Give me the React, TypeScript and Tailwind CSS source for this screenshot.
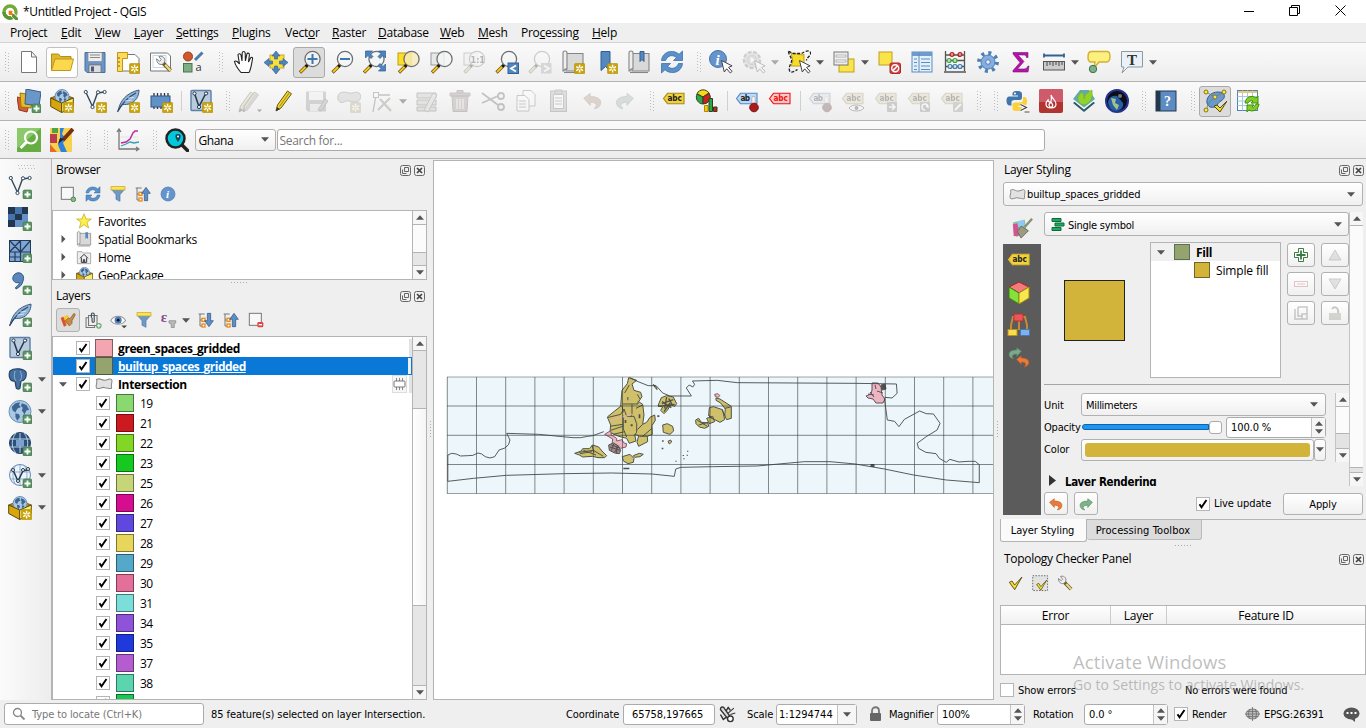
import React from "react";

type Kids = { children?: React.ReactNode };
const TAHOMA = "font-['DejaVu_Sans_Condensed','DejaVu_Sans',sans-serif] text-[11px] tracking-[-0.1px]";

/* ---------- icon building blocks ---------- */
const I = ({ children, s = 24, dim = false }: Kids & { s?: number; dim?: boolean }) => (
  <svg viewBox="0 0 24 24" width={s} height={s} className={dim ? "shrink-0 opacity-30 grayscale-[70%]" : "shrink-0"} fill="none">
    {children}
  </svg>
);
const Plus = () => (
  <g>
    <rect x="15" y="15" width="9" height="9" rx="1.5" fill="#5b9361" stroke="#3f7346" strokeWidth=".6" />
    <path d="M19.5 16.5v6M16.5 19.5h6" stroke="#fff" strokeWidth="1.8" />
  </g>
);
const Star = () => (
  <g>
    <rect x="13.5" y="13.5" width="10.3" height="10.3" rx="1" fill="#c9a30a" stroke="#a98700" strokeWidth=".5" />
    <path d="M18.6 14.8v7.8M15.2 16.7l6.8 4M15.2 20.7l6.8-4" stroke="#fff" strokeWidth="1.4" />
    <circle cx="18.6" cy="18.7" r="1.2" fill="#d9b42c" />
  </g>
);
const Lens = ({ x = 14, fill = "#f4f6f7" }: { x?: number; fill?: string }) => (
  <g>
    <path d={`M${x - 5.5} 15.5L${x - 12.5} 22.5`} stroke="#6b5310" strokeWidth="3.2" />
    <path d={`M${x - 7} 17L${x - 12} 22`} stroke="#f8c81c" strokeWidth="1.8" />
    <path d={`M${x - 4.5} 14.5l-2 2`} stroke="#111" strokeWidth="3" />
    <circle cx={x} cy="9" r="7.6" fill={fill} fillOpacity=".82" stroke="#6d7073" strokeWidth="1.3" />
  </g>
);
const Cursor = () => <path d="M12.5 10.5l2.8 11.5 2.4-3.2 3.6 4.2 1.8-1.6-3.6-4 3.6-1.5z" fill="#fff" stroke="#444" strokeWidth="1" />;
const Vee = () => (
  <g stroke="#34495e" strokeWidth="1.4">
    <path d="M3 3.5l6.5 14 5-13.5 7-1" />
    <circle cx="2.8" cy="3" r="1.6" fill="#fff" strokeWidth="1" />
    <circle cx="9.5" cy="18" r="1.6" fill="#fff" strokeWidth="1" />
    <circle cx="15" cy="3.3" r="1.6" fill="#fff" strokeWidth="1" />
    <circle cx="21.6" cy="3" r="1.6" fill="#fff" strokeWidth="1" />
  </g>
);
const Feather = () => (
  <g>
    <path d="M2 22C4 12 10 4 23 1c0 6-3 12-10 14-4 1-6 0-7 1z" fill="#8fb4da" stroke="#3d5a7a" strokeWidth="1" />
    <path d="M1.5 23C6 14 12 8 20 4" stroke="#2d4a6b" strokeWidth="1.2" />
    <path d="M9 12l7-1M12 9l6-.5" stroke="#e4eef8" strokeWidth=".8" />
  </g>
);
const Globe = ({ cx = 12, cy = 11.5, r = 11 }: { cx?: number; cy?: number; r?: number }) => (
  <g>
    <circle cx={cx} cy={cy} r={r} fill="#a9c8e8" stroke="#6f90b4" strokeWidth="1" />
    <g transform={`translate(${cx - r} ${cy - r}) scale(${r / 12})`} fill="#3f658f">
      <path d="M3 7l4-4 5-1-1 3 2 2-4 2-2 4-3-2zM14 3l5 2 3 5-3 1-2 4-3-4 1-3-2-2zM7 14l4 1 1 3-3 4-2-4zM16 15l4 1-3 4-2-2z" />
    </g>
  </g>
);
const Box3D = () => (
  <g>
    <path d="M.7 9l11-4.500 11.600 4.500-11.600 5z" fill="#b48c0c" stroke="#5c4a0d" strokeWidth=".8" />
    <Globe cx={12} cy={7.5} r={7} />
    <path d="M.7 9l11 5v9.500L.7 17.500z" fill="#d9a50b" stroke="#5c4a0d" />
    <path d="M11.700 14l11.600-5v8.500l-11.600 6z" fill="#fbee6d" stroke="#5c4a0d" />
  </g>
);
const Tag = ({ c = "#f0d03c", t = "abc", s = "#a58c14", f = "#222", y = 4 }: { c?: string; t?: string; s?: string; f?: string; y?: number }) => (
  <g>
    <path d={`M1.500 ${y + 5.5}l4-5.200h16.500v10.400H5.500z`} fill={c} stroke={s} strokeWidth="1.1" />
    <text x="5.500" y={y + 8.4} fontSize="8.200" fontWeight="bold" fontFamily="DejaVu Sans Condensed, DejaVu Sans" fill={f} textLength={t.length * 4.8}>{t}</text>
  </g>
);
const PencilShape = ({ x = 0 }: { x?: number }) => (
  <g transform={`translate(${x} 0)`}>
    <path d="M5 22l1.500-6L16.500 2l4 2.800L10 19z" fill="#f1d32a" stroke="#655a16" />
    <path d="M8.500 17.500L18.500 3.500" stroke="#a08a12" />
    <path d="M5 22l1-4 3 2.200z" fill="#333" />
  </g>
);
const Db = () => (
  <g>
    <rect x="2" y="1.500" width="20" height="20" rx="1" fill="#b9cbdc" stroke="#5b7fa6" strokeWidth="1.400" />
    <path d="M5.500 4.500l4.500 13L16 6l3-2.500" stroke="#24394f" strokeWidth="1.500" />
    <g fill="#fff" stroke="#24394f"><circle cx="5.500" cy="4.500" r="1.600" /><circle cx="10" cy="18" r="1.600" /><circle cx="17" cy="4.500" r="1.600" /></g>
  </g>
);
const Refresh = () => (
  <g fill="#5b91cb" stroke="#2f65a0" strokeWidth=".7">
    <path d="M1.500 10.500C2 4.500 7 1 12.500 1.500c3 .2 5 1.300 6.500 2.800L22.500 1v9.500h-9L16.500 7.500C12.500 4.500 8 5 5.500 10.500z" />
    <path d="M22.500 13.500C22 19.500 17 23 11.500 22.500c-3-.2-5-1.300-6.500-2.800L1.500 23v-9.500h9L7.500 16.500c4 3 8.500 2.500 11-3z" />
  </g>
);
const Funnel = () => (
  <g><path d="M2 5h20l-7 8v10l-6-3v-7z" fill="#7199c6" stroke="#4b76a6" /><rect x="1.500" y="1" width="21" height="5" fill="#fbe257" stroke="#c3a21a" /></g>
);
const Tree = ({ down = false }: { down?: boolean }) => (
  <g>
    <path d="M1 3h9M3 3v18M3 12h5M3 21h5" stroke="#777" strokeWidth="1.500" />
    <g fill="#fff" stroke="#ea8b1c" strokeWidth="2"><rect x="6" y="9.500" width="4.500" height="4.500" /><rect x="6" y="18" width="4.500" height="4.500" /></g>
    <path d={down ? "M14 2h5v11h4l-6.500 9-6.500-9h4z" : "M14 22h5V11h4L16.500 2 10 11h4z"} fill="#5f8fc7" stroke="#24507f" />
  </g>
);
const Info = () => (
  <g><circle cx="12" cy="12" r="10.500" fill="#6494cb" stroke="#4475ad" /><text x="9" y="18" fontSize="17" fontStyle="italic" fontWeight="bold" fontFamily="Liberation Serif" fill="#fff">i</text></g>
);
const Poly = () => <path d="M2 6C7 3 9 8 14 7s6-3 8-1-1 6 0 10-5 1-9 1c-3-2-6 2-10 1S4 10 2 6z" fill="#e2e2e2" stroke="#888" strokeWidth="1.400" />;
const Wrench = () => (
  <g><path d="M10 10l10 10" stroke="#6b5a20" strokeWidth="5" /><path d="M13 12.500l7 7.500" stroke="#ecd78a" strokeWidth="3" /><path d="M2 5l4 3 2-2L5 2c6-2 10 4 6 9-4 3-9 0-9-6z" fill="#eee" stroke="#666" /></g>
);
const Check = () => <path d="M2 11l4-2 4 6L21 3 10 22z" fill="#f6dc2c" stroke="#4b430d" strokeWidth="1.300" />;
const Scroll = () => (
  <g stroke="#858585" strokeWidth="1.100"><path d="M5 3.500h17V21H5z" fill="#d9d9d9" /><path d="M2 2.500c0-2 4-2 4 0V19c-2-.5-3 .5-3 2H2z" fill="#eee" /><path d="M3 22.500h18" /></g>
);
const Undo = () => <path d="M1 9l8-6v4c9 0 14 3 13 9-1 4-4 6-8 6 4-3 4-8-5-8v4z" fill="#ea7b3b" stroke="#ba5b23" />;
const Redo = ({ c = "#7cb487" }: { c?: string }) => <path d="M23 9l-8-6v4C6 7 1 10 2 16c1 4 4 6 8 6-4-3-4-8 5-8v4z" fill={c} stroke="#548760" />;
const Star5 = ({ s }: { s: number }) => <svg width={s} height={s} viewBox="0 0 24 24"><path d="M12 1l3 8h8l-6.500 5 2.500 8.500-7-5-7 5L7.500 14 1 9h8z" fill="#fdf04a" stroke="#c1a018" /></svg>;

const ic: Record<string, React.ReactNode> = {
  newFile: <path d="M4.500 1.500h10l5 5.500v15.500h-15zM14.500 1.500V7h5" fill="#fff" stroke="#777" />,
  open: <g><path d="M1.500 20.500V4h7l2 2.500H21v4" fill="#e0b62c" stroke="#b28d17" /><path d="M1.500 20.500L5 9h18.500l-3 11.500z" fill="#fbd84c" stroke="#bf9820" /></g>,
  save: <g><path d="M2 2.500h20v20H4l-2-2z" fill="#6a95c6" stroke="#456f9f" /><rect x="5" y="2.500" width="14" height="9" fill="#eee" stroke="#888" strokeWidth=".7" /><path d="M7 5h10M7 7.500h10" stroke="#888" /><rect x="6" y="15" width="12" height="7.500" fill="#ddd" stroke="#667" strokeWidth=".7" /><rect x="8" y="16.500" width="3" height="5" fill="#557" /></g>,
  layout: <g><path d="M5 4.500h14l4 4V21H5z" fill="#fff" stroke="#777" /><path d="M1.500 2.500h10v6h-5v13h-5z" fill="#fbdb57" stroke="#bd9520" /><path d="M2 12h2M2 16h2M2 8h2" stroke="#806412" /><Star /></g>,
  layoutMgr: <g><path d="M1.500 3h17l3 3v15h-20z" fill="#fff" stroke="#777" /><path d="M4 5.500h13v12H4z" stroke="#c6d6ea" /><g transform="translate(6 5) scale(.78)"><Wrench /></g></g>,
  style: <g><circle cx="6" cy="6.500" r="4.500" fill="#d0562c" stroke="#9b3c1a" /><path d="M13 10l7.500-7.500" stroke="#4d7cab" strokeWidth="3" /><rect x="1.500" y="13.500" width="8.500" height="8.500" fill="#7fae85" stroke="#48764e" /><text x="13.500" y="20.500" fontSize="11" fontFamily="Open Sans" fill="#333">a</text></g>,
  hand: <path d="M8 22.500C5 19 2 14 1.500 11.500 3 10 5 12 6.500 14L5 5c.5-2 2.500-1.500 3 0l1 6 .2-8c.3-2 2.500-2 3 0l.2 8 1.500-7c.5-1.500 2.500-1 2.500.7L15.500 12l2-4c1-1.200 2.500-.3 2 1-1 5-1.500 10-3.500 13.500z" fill="#fff" stroke="#222" strokeWidth="1.100" transform="translate(2 0)" />,
  pan: <g><rect x="6" y="5" width="14" height="13" fill="#f8df3c" stroke="#c9a91d" /><g fill="#4f83bd" stroke="#2d5d93" strokeWidth=".6"><path d="M12 1l4 5h-2.500v3h-3V6H8zM12 24l4-5h-2.500v-3h-3v3H8zM0 12.500l5-4V11h3.500v3H5v2.500zM24 12.500l-5-4V11h-3.500v3H19v2.500z" /></g></g>,
  zoomIn: <g><Lens x={15.500} /><path d="M15.500 4v10M10.500 9h10" stroke="#3f76b1" strokeWidth="2" /></g>,
  zoomOut: <g><Lens x={15} /><path d="M10 9h10" stroke="#3f76b1" strokeWidth="2" /></g>,
  zoomFull: <g><Lens x={13.500} /><path d="M2.500 1h7L7 3.500l3 3-2 2-3-3L2.500 8zM22.500 1v7L20 5.500l-3 3-2-2 3-3L15.500 1zM22.500 21v-7L20 16.500l-3-3-2 2 3 3-2.500 2.500z" fill="#4f83bd" stroke="#2d5d93" strokeWidth=".7" /></g>,
  zoomSel: <g><rect x="2" y="3" width="13" height="12" fill="#fbdf27" stroke="#bd9f12" /><Lens x={15.500} fill="#f6ebb8" /></g>,
  zoomLayer: <g><rect x="2" y="3" width="13" height="12" fill="#e8e8e8" stroke="#999" /><Lens x={15.500} /></g>,
  zoomNative: <g><rect x="2" y="3" width="13" height="12" fill="#eee" stroke="#777" /><Lens x={15} /><text x="8.500" y="12.500" fontSize="9" fontWeight="bold" fontFamily="DejaVu Sans Condensed" fill="#222">1:1</text></g>,
  zoomLast: <g><Lens x={14} /><rect x="13" y="13" width="10.500" height="10.500" fill="#5385bd" stroke="#2f6199" /><path d="M21 15.500l-5 3 5 3" stroke="#fff" strokeWidth="1.800" /></g>,
  zoomNext: <g><Lens x={14} /><rect x="13" y="13" width="10.500" height="10.500" fill="#999" /><path d="M16 15.500l5 3-5 3" stroke="#fff" strokeWidth="1.800" /></g>,
  newMap: <g><Scroll /><Star /></g>,
  newBm: <g><path d="M7 1.500h9v19l-4.500-4L7 20.500z" fill="#5688c0" stroke="#2f5f94" /><Star /></g>,
  bm: <g><Scroll /><path d="M13 1.500h4v10l-2-2-2 2z" fill="#5688c0" stroke="#2f5f94" /></g>,
  refresh: <Refresh />,
  identify: <g><circle cx="9" cy="9" r="8.500" fill="#6494cb" stroke="#4475ad" /><text x="6.500" y="14.500" fontSize="15" fontStyle="italic" fontWeight="bold" fontFamily="Liberation Serif" fill="#fff">i</text><Cursor /></g>,
  action: <g><circle cx="10" cy="10" r="8" fill="#ccc" stroke="#777" strokeWidth="2.500" strokeDasharray="4 1.500" /><circle cx="10" cy="10" r="5" fill="#aaa" stroke="#888" /><path d="M8.500 7l4.500 3-4.500 3z" fill="#fff" /><Cursor /></g>,
  select: <g><path d="M4 3l12 2 1-1v12H4l2-5z" fill="#f6dc2a" stroke="#c3a014" /><path d="M1.500 1.500c2 0 3 2 5 2h8c3-2 8-4 9-1s-4 5-4 8M1.500 1.500c0 3 4 7 3 10s-3 6-2 9 5 1 8-1" stroke="#222" strokeWidth="1.300" strokeDasharray="3 1.500" /><Cursor /></g>,
  selForm: <g><rect x="7" y="9" width="15" height="13" fill="#fbe34c" stroke="#bfa018" /><rect x="2" y="2" width="14" height="13" fill="#eee" stroke="#777" /><path d="M4 5h10v2H4zM4 10h10v2H4z" fill="#fff" stroke="#999" strokeWidth=".7" /></g>,
  desel: <g><rect x="2" y="2" width="13" height="13" fill="#fbe34c" stroke="#bfa018" /><rect x="13" y="13" width="10.500" height="10.500" rx="1.500" fill="#d33f3f" stroke="#ad2727" /><circle cx="18.200" cy="18.200" r="3.500" stroke="#fff" strokeWidth="1.500" /><path d="M15.800 20.600l4.800-4.800" stroke="#fff" strokeWidth="1.500" /></g>,
  table: <g><rect x="2" y="2" width="20" height="20" fill="#e3f0fb" stroke="#5d8cbf" /><path d="M2 2h20v4H2z" fill="#6d9bce" /><path d="M9 3v19M4 9h3M11 9h9M4 12.500h3M11 12.500h9M4 16h3M11 16h9M4 19.500h3M11 19.500h9" stroke="#5d8cbf" /></g>,
  abacus: <g><path d="M2.500 1v20M21.500 1v20M1 22h22M3 5h18M3 10.500h18M3 16.500h18" stroke="#555" strokeWidth="1.300" /><g strokeWidth="1.200"><circle cx="9" cy="4.500" r="2" fill="#f08a8a" stroke="#b41a1a" /><circle cx="17" cy="4.500" r="2" fill="#f08a8a" stroke="#b41a1a" /><circle cx="6" cy="10.500" r="2" fill="#b5e8b5" stroke="#43a047" /><circle cx="12" cy="10.500" r="2" fill="#b5e8b5" stroke="#43a047" /><circle cx="7" cy="16.500" r="2" fill="#cfe4f5" stroke="#4478a8" /><circle cx="12" cy="16.500" r="2" fill="#cfe4f5" stroke="#4478a8" /><circle cx="17" cy="16.500" r="2" fill="#cfe4f5" stroke="#4478a8" /></g></g>,
  gear: <g stroke="#4c7eb8" fill="#86ade0"><circle cx="12" cy="12" r="9" strokeWidth="3.800" strokeDasharray="3 4.070" fill="none" /><circle cx="12" cy="12" r="7" /><circle cx="12" cy="12" r="2.300" fill="#eee" /></g>,
  sigma: <path d="M4 2.500h15v5h-1.500c-.5-2-1-2.500-3.500-2.500H9l6 6.500L8.500 19H15c2 0 3-1 4-3h1l-1 6H4v-1.500L11 12.500 4 4z" fill="#b315a8" stroke="#7f0d78" strokeWidth=".6" />,
  measure: <g><path d="M2 5.500h20M2 3.500v4M22 3.500v4" stroke="#34618f" strokeWidth="1.800" /><rect x="1.500" y="11.500" width="21" height="8.500" fill="#ccc" stroke="#555" /><path d="M5 12v4M8 12v3M11 12v4M14 12v3M17 12v4M20 12v3" stroke="#444" /></g>,
  tips: <g><path d="M4 1.500h16c4 0 4 10 0 10.500h-8l-5 6 1-6H4C0 12 0 2 4 1.500z" fill="#fdf07e" stroke="#d0b131" strokeWidth="1.400" /><circle cx="6" cy="19" r="3.700" fill="#7bb08a" stroke="#3f7047" /></g>,
  text: <g><path d="M1.500 1.500h21V17H8l-6 6 2-6H1.500z" fill="#eaf1f7" stroke="#8f99a0" /><text x="7" y="14.500" fontSize="15" fontWeight="bold" fontFamily="Liberation Serif" fill="#333">T</text></g>,
  dsm: <g><path d="M0 8l13 3-3 12-8-2z" fill="#d46036" stroke="#91351b" /><path d="M3 4l13 2-2 13-10-1z" fill="#e9b823" stroke="#9a7408" /><path d="M9 0l15 3-2 14-14-2z" fill="#6b97c8" stroke="#365f8c" /><Plus /></g>,
  gpkg: <g><Box3D /><Star /></g>,
  gpkgL: <g><Box3D /><Star /></g>,
  shp: <g><Vee /><Star /></g>,
  spatialite: <g><Feather /><Star /></g>,
  mem: <g><path d="M5 4v16M8.500 4v16M12 4v16M15.500 4v16M19 4v16" stroke="#333" strokeWidth="1.300" /><rect x="2" y="7" width="19" height="11" fill="#6291c7" stroke="#2c5686" /><Star /></g>,
  virt: <g><Db /><Star /></g>,
  edits: <g><g transform="translate(-4 1)"><PencilShape /></g><g transform="translate(0 1)"><PencilShape /></g><path d="M6 21L17 4l3 2L9 22z" fill="#999" /><path d="M19 20.500h5L21.500 23z" fill="#000" /></g>,
  pencil: <PencilShape />,
  saveE: <g><path d="M2 2.500h20v20H4l-2-2z" fill="#888" /><rect x="5" y="3" width="14" height="8" fill="#eee" /><rect x="6" y="15" width="11" height="7" fill="#ddd" /><path d="M14 21l7-11 3 2-7 10z" fill="#b88" stroke="#555" /></g>,
  addPoly: <g><path d="M1 7C2 2 8 3 12 4s8-3 11 1-2 9-7 8-5-2-9 0-7-2-6-6z" fill="#bbb" stroke="#666" /><Star /></g>,
  vertex: <g><path d="M6 6L3 23M6 6h14" stroke="#555" strokeWidth="1.300" /><rect x="3.500" y="3.500" width="5" height="5" fill="#fff" stroke="#555" /><path d="M10 10l11 12M20 9L8 21" stroke="#775" strokeWidth="2.200" /></g>,
  modAttr: <g><path d="M2 4h19v5H2zM2 11h19v5H2zM2 18h19v4H2z" fill="#b5c4a8" stroke="#555" /><path d="M9 21l9-17 4 2-9 17z" fill="#c9c9c9" stroke="#666" /></g>,
  trash: <g><path d="M2 4h20v3H2zM4 7h16l-1 15.500H5zM9 4V1.500h6V4" fill="#b07d7d" stroke="#8a4b4b" /><path d="M9 10v10M12 10v10M15 10v10" stroke="#fff" /></g>,
  cut: <g stroke="#555" strokeWidth="1.800"><path d="M1 4l16 12M1 14l16-7" /><circle cx="20" cy="18" r="3" /><circle cx="20" cy="7" r="3" /></g>,
  copy: <g stroke="#666" fill="#fff"><path d="M9 1.500h8l4 4V17H9z" /><path d="M3 6.500h8l4 4V22H3z" /><path d="M5 12h7M5 15h7M5 18h7" /></g>,
  paste: <g stroke="#666"><rect x="3.500" y="2" width="16" height="20.500" fill="#aaa" /><path d="M6.500 5.500h10v14h-10z" fill="#fff" /><path d="M8 1h7v4H8zM8 9h7M8 12h7M8 15h7" /></g>,
  undo: <g transform="translate(3 2) scale(.8)"><Undo /></g>,
  redo: <g transform="translate(2 2) scale(.8)"><Redo /></g>,
  abc: <Tag />,
  diagram: <g strokeWidth="1" stroke="#33411b"><path d="M8 8L8 15A7 7 0 0 1 2 5z" fill="#25a84e" /><path d="M8 8L2 4.500A7 7 0 0 1 14 4z" fill="#f7d91b" /><path d="M8 8l6-4A7 7 0 0 1 8 15z" fill="#ca2020" /><path d="M9.500 16.500h3.500v6H9.500z" fill="#f7c91b" stroke="#b38600" /><path d="M14 9.500h3.500v13H14z" fill="#25a84e" /><path d="M18.500 18H22v4.500h-3.500z" fill="#ca2020" /></g>,
  abPin: <g><Tag c="#b9dafb" t="ab" s="#5388c5" /><path d="M18.500 9v7" stroke="#aaa" strokeWidth="4" strokeLinecap="round" /><path d="M18.500 9v7" stroke="#f4f4f4" strokeWidth="2.500" strokeLinecap="round" /><circle cx="19" cy="18.500" r="4.300" fill="#ab1d1d" stroke="#7a1414" /></g>,
  abcRed: <Tag c="#f9c9c9" s="#e11" f="#e11" />,
  eye: <g><Tag /><path d="M8 19c3-4 12-4 15 0-3 4-12 4-15 0z" fill="#fff" stroke="#333" /><circle cx="15.500" cy="19" r="2" fill="#333" /></g>,
  abcMove: <g><Tag /><rect x="13" y="13" width="10" height="10" rx="1" fill="#777" /><path d="M15 18h6M18 15l3 3-3 3" stroke="#fff" strokeWidth="1.500" /></g>,
  abcRot: <g><Tag /><rect x="13" y="13" width="10" height="10" rx="1" fill="#777" /><path d="M18 21a3 3 0 1 1 3-3l-2-1" stroke="#fff" strokeWidth="1.500" /></g>,
  abcEd: <g><Tag /><rect x="13" y="13" width="10" height="10" rx="1" fill="#887" /><path d="M15 21l6-6" stroke="#fff" strokeWidth="2" /></g>,
  python: <g><path d="M11 2c-4.500 0-4.500 1.500-4.500 4.500H12v1H4c-3 0-3.500 2-3.500 4.500s1 4.500 3.500 4.500h1.500v-3.500c0-1 1-2 3-2h5c2 0 2.500-1 2.500-3V5.500C16 2.500 14 2 11 2z" fill="#3f76ab" /><path d="M10 22c-3 0-3.500-1-3.500-3v-3.500c0-1 1-2 2-2H14c2 0 3-1 3-3V8h1.500c2 0 2.500 2 2.500 4.500S20 17 18 17h-6v1h4v1.500c0 2-3 2.500-6 2.500z" fill="#fbd03b" /><circle cx="9" cy="4.500" r="1" fill="#fff" /><path d="M14.500 15.500l6 3-6 3M18.500 23h5" stroke="#fff" strokeWidth="2.600" /><path d="M14.500 15.500l6 3-6 3M18.500 23h5" stroke="#444" strokeWidth="1.200" /></g>,
  fire: <g><rect x="0" y="0" width="24" height="24" rx="2" fill="#b23431" /><path d="M0 2c0-1 1-2 2-2h20c1 0 2 1 2 2v11H0z" fill="#cf5a6a" /><path d="M12 6c1 4 5 5 5 9 0 3-2 4-5 4s-5-1-5-4c0-2 1-3 2-4 0 2 1 2 2 2s2-3 1-7zM12 13c-2 2-3 3-1 5h2c2-2 0-3-1-5z" stroke="#fff" strokeWidth="1.200" /></g>,
  leaf: <g><path d="M1 14l11 9 11-9-11-8z" fill="#2d5965" /><path d="M1 11.500l11 9 11-9L12 3z" fill="#eefafa" /><path d="M1 10L8 1h9l6 9-11 8.500z" fill="#65a9ac" /><path d="M6 9c0-3 3-5 4-6 2 2 2 4 2 7 1-5 4-7 8-9 1 8-1 13-8 15-4-1-6-3-6-7z" fill="#93d22d" stroke="#6cad1b" strokeWidth=".5" /></g>,
  earth: <g><circle cx="12" cy="12" r="11" fill="#0d0d1a" stroke="#24338f" strokeWidth="2" /><path d="M3 14c0-5 4-8 9-7l6 7c1 4-2 7-6 8-5 0-8-3-9-8z" fill="#245da8" /><path d="M6 9l5 1-1 4 4 2-2 5-4-5z" fill="#a7c183" /><circle cx="15" cy="7" r="2" fill="#777" /></g>,
  help: <g><rect x="2" y="2" width="20" height="20" fill="#5d8cc4" stroke="#23384e" /><rect x="2" y="2" width="4.500" height="20" fill="#24384b" /><text x="10" y="17" fontSize="14" fontWeight="bold" fontFamily="Liberation Serif" fill="#fff">?</text></g>,
  topo: <g><path d="M4 14C3 8 8 3 15 3c8 0 8 6 3 9-4 2-3 5-6 6-4 1-7 0-8-4z" fill="#6b98cf" stroke="#385e8c" /><path d="M3 3l9 5 9-5M3 21l3-7 6-6" stroke="#586" strokeWidth=".8" /><g fill="#fbe84a" stroke="#887515"><circle cx="3" cy="3" r="2" /><circle cx="21" cy="3" r="2" /><circle cx="3" cy="21" r="2" /><circle cx="12" cy="8" r="2" /></g><path d="M11 17l3-1 3 3 7-7-7 11z" fill="#f7dc27" stroke="#544b0e" /></g>,
  tblRef: <g><rect x="1.500" y="1.500" width="20" height="20" fill="#fff" stroke="#4b81b7" /><path d="M1.500 3h20M1.500 7.500h20M1.500 12h20M1.500 16.500h20M6.500 1.500v20M11.500 1.500v20M16.500 1.500v20" stroke="#a5c8e4" /><path d="M2 2h19v2H2z" fill="#f2c56f" /><path d="M9 14c1-7 7-8 11-5l2-2v7h-7l2-2c-2-1-4 0-5 2zM23 15c-1 7-7 8-10 6l-2 2v-7h7l-2 2c2 1 3-1 4-3z" fill="#82cf20" stroke="#3f8f0d" /></g>,
  osmQ: <g><rect width="24" height="24" fill="#67ad43" /><path d="M0 0h24L0 20z" fill="#8cc96b" /><circle cx="14" cy="9.500" r="6" stroke="#fff" strokeWidth="2.200" /><path d="M9.500 14l-6 6" stroke="#fff" strokeWidth="3" /></g>,
  mapEd: <g><rect width="22" height="24" fill="#f7d24f" /><path d="M0 6h7v9H0z" fill="#be3b4b" /><path d="M2 0h6v5H2z" fill="#4aa548" /><path d="M10 0h4l-2 6 4 5-3 4 4 9h-6l-3-7 2-7z" fill="#2f80e0" /><path d="M0 16l7 8H0z" fill="#e56b2d" /><path d="M23 1L13 12" stroke="#7b3015" strokeWidth="4" /><path d="M14 11l-6 5 2-6z" fill="#222" /></g>,
  chart: <g><path d="M4 9h18M4 14h18" stroke="#ddd" strokeWidth=".6" /><path d="M3 1v20h20M1 4l2-3 2 3M20 19l3 2-3 2" stroke="#777" strokeWidth="1.300" /><path d="M5 18l5-2 4-2 4 1 5-1" stroke="#34a4b0" strokeWidth="1.300" /><path d="M5 15l5-1 4-3 3-6 2-2h3" stroke="#c12a9f" strokeWidth="1.500" /></g>,
  geoSearch: <g><path d="M16.500 16.500l6 6" stroke="#222" strokeWidth="3.500" strokeLinecap="round" /><circle cx="10.500" cy="10.500" r="9" fill="#00c9dd" stroke="#222" strokeWidth="2.500" /><path d="M13 6c4 0 3 4 0 8-3-4-4-8 0-8z" fill="#174652" /><circle cx="13" cy="8.500" r="1" fill="#fff" /></g>,
  vectorL: <g><Vee /><Plus /></g>,
  rasterL: <g><rect x="0" y="0" width="20" height="20" fill="#6492c8" /><path d="M0 0h7v7H0zM14 0h6v7h-6zM7 7h7v6H7zM0 13h7v7H0z" fill="#22364f" /><path d="M7 0h7v7H7zM0 7h7v6H0z" fill="#4574ad" /><Plus /></g>,
  meshL: <g><rect x="1.500" y="1.500" width="21" height="21" fill="#7ea6d4" stroke="#243b57" /><path d="M1.500 13h21M12.500 1.500v21M1.500 1.500l11 11.500M12.500 1.500l-11 11.500M22.500 1.500l-10 11.500M1.500 18h11M7 13v9" stroke="#243b57" strokeWidth="1.200" /><Plus /></g>,
  commaL: <g><path d="M6 4c4-5 12-1 9 6-1 4-3 6-7 8l-.5-1.500c3-2 4-4 4-5C6 13 3 8 6 4z" fill="#5b87bd" stroke="#31577f" /><Plus /></g>,
  spatialL: <g><Feather /><Plus /></g>,
  virtL: <g><Db /><Plus /></g>,
  pgL: <g><path d="M2 3c5-4 14-2 16 1 1 6-2 9-5 9l-1 7c-1 2-4 1-4-1l-1-6c-5 1-7-5-5-10z" fill="#44709f" stroke="#234468" strokeWidth="1.200" /><path d="M7 3c-1 5-1 7 1 10M12 3c2 4 2 7 0 10" stroke="#8fb2d8" /><Plus /></g>,
  wmsL: <g><Globe /><Plus /></g>,
  wcsL: <g><circle cx="12" cy="11" r="10.500" fill="#2d507a" stroke="#1f3d60" /><path d="M2 7h20M2 15h20M12 1v20M8 1C3 7 3 16 8 21M16 1c5 6 5 15 0 20" stroke="#b7d0ea" /><path d="M8 8h8v6H8z" fill="#79a2d1" /><Plus /></g>,
  wfsL: <g><circle cx="12" cy="11" r="10.500" fill="#edf4fb" stroke="#6188b3" /><path d="M2 8h20M2 15h20M12 1v20M8 1C4 7 4 16 8 21M16 1c4 6 4 15 0 20" stroke="#8dadd1" /><path d="M5 6l5 11 5-10 4-1" stroke="#26394c" strokeWidth="1.500" /><g fill="#fff" stroke="#26394c"><circle cx="5" cy="6" r="1.500" /><circle cx="10" cy="17" r="1.500" /><circle cx="15" cy="6" r="1.500" /><circle cx="20" cy="5" r="1.500" /></g><Plus /></g>,
};

/* ---------- widgets ---------- */
const Arrow = ({ dim = false }: { dim?: boolean }) => (
  <svg width="8" height="5" viewBox="0 0 8 5" className="shrink-0"><path d="M0 .3h8L4 4.700z" fill={dim ? "#aaa" : "#555"} /></svg>
);
const UpArrow = () => <svg width="8" height="5" viewBox="0 0 8 5" className="shrink-0"><path d="M0 4.700h8L4 .3z" fill="#555" /></svg>;
const Handle = ({ w = 16 }: { w?: number }) => (
  <div className="flex h-full shrink-0 items-center justify-end pr-[3px]" style={{ width: w }}>
    <svg width="5" height="20"><path d="M.5 0v20M3.500 1v19" stroke="#bdbdbd" strokeDasharray="1 2" /></svg>
  </div>
);
const HHandle = () => <svg width="17" height="4"><path d="M0 .5h17M1 3.500h16" stroke="#bdbdbd" strokeDasharray="1 2" /></svg>;
const Dots = () => <svg width="17" height="2"><path d="M0 .5h17" stroke="#aaa" strokeDasharray="1 2" /></svg>;
const Sep = () => <div className="flex w-[7px] shrink-0 justify-center"><div className="h-[20px] w-px bg-[#d0d0d0]" /></div>;
const Bar = ({ items }: { items: string[] }) => (
  <>
    {items.map((it, i) => {
      if (it === "|") return <Handle key={i} />;
      if (it === "/") return <Sep key={i} />;
      if (it === "v" || it === "V") return <div key={i} className="flex w-3 shrink-0 justify-start"><Arrow dim={it === "V"} /></div>;
      const dim = it[0] === "-";
      const on = it[0] === "*";
      const hot = it[0] === "+";
      const name = dim || on || hot ? it.slice(1) : it;
      return (
        <div key={i} className="flex w-[33px] shrink-0 justify-center">
          <div className={`flex h-[31px] w-[32px] shrink-0 items-center justify-center rounded-[3px] ${on ? "border border-[#a9a9a9] bg-[#dcdcdc]" : hot ? "border border-[#c0c0c0] bg-white" : ""}`}>
            <I dim={dim}>{ic[name]}</I>
          </div>
        </div>
      );
    })}
  </>
);
const Tick = () => (
  <span className="flex h-[14px] w-[14px] shrink-0 items-center justify-center border border-[#b5b5b5] bg-white">
    <svg width="10" height="10" viewBox="0 0 10 10"><path d="M1.500 5.200l2 3L8.500 1" stroke="#000" strokeWidth="1.900" fill="none" /></svg>
  </span>
);
const PanelBtns = () => (
  <div className="flex gap-[3px]">
    <svg width="11" height="11"><rect x=".5" y=".5" width="10" height="10" rx="2" fill="none" stroke="#666" /><path d="M4.500 2.500h4v4h-4zM2.500 4.500v4h4" fill="none" stroke="#666" /></svg>
    <svg width="11" height="11"><rect x=".5" y=".5" width="10" height="10" rx="2" fill="none" stroke="#666" /><path d="M3 3l5 5M8 3L3 8" stroke="#444" strokeWidth="1.700" /></svg>
  </div>
);
const PanelTitle = ({ t, pr }: { t: string; pr: string }) => (
  <div className={`flex h-[18px] shrink-0 items-center justify-between pl-1 ${pr}`}>
    <span className="tracking-[-0.3px]">{t}</span>
    <PanelBtns />
  </div>
);
const SBtn = ({ up = false }: { up?: boolean }) => (
  <div className={`flex h-[14px] shrink-0 items-center justify-center bg-[#f6f6f6] ${up ? "border-b" : "border-t"} border-[#b4b4b4]`}>{up ? <UpArrow /> : <Arrow />}</div>
);
const BTN = "rounded-[3px] border border-[#b1b1b1] bg-linear-to-b from-white to-[#f0f0f0]";
const LBar = ({ items }: { items: [React.ReactNode, number][] }) => (
  <>{items.map(([n, w], i) => <div key={i} className="flex shrink-0 items-center justify-center" style={{ width: w }}>{n}</div>)}</>
);
const Exp = ({ open = false, w = 24 }: { open?: boolean; w?: number }) => (
  <span className="flex shrink-0 items-center justify-center" style={{ width: w }}>
    {open ? <Arrow /> : <svg width="5" height="8"><path d="M.5 0v8l4-4z" fill="#555" /></svg>}
  </span>
);

const menus: [string, string, string, number][] = [
  ["Pro", "j", "ect", 51], ["", "E", "dit", 34], ["", "V", "iew", 39], ["", "L", "ayer", 42], ["", "S", "ettings", 56], ["", "P", "lugins", 53],
  ["Vect", "o", "r", 47], ["", "R", "aster", 46], ["", "D", "atabase", 62], ["", "W", "eb", 38], ["", "M", "esh", 43], ["Pro", "c", "essing", 71], ["", "H", "elp", 40],
];
const classes: [string, string][] = [
  ["19", "#89d870"], ["21", "#cd1a21"], ["22", "#82d626"], ["23", "#16c920"], ["25", "#c6d578"], ["26", "#d60d8f"], ["27", "#6047df"], ["28", "#e8d55c"],
  ["29", "#54a9cb"], ["30", "#e4709a"], ["31", "#7bded9"], ["34", "#8e53d8"], ["35", "#2039dd"], ["37", "#b55dd0"], ["38", "#5bd5ae"],
];
const Swatch = ({ c }: { c: string }) => <span className="h-[18px] w-[18px] shrink-0 border border-black/45" style={{ backgroundColor: c }} />;

const LeftTools = () => {
  const list: [string, boolean][] = [["vectorL", false], ["rasterL", false], ["meshL", false], ["commaL", false], ["spatialL", false], ["virtL", false], ["pgL", true], ["wmsL", true], ["wcsL", false], ["wfsL", true], ["gpkgL", true]];
  return (
    <div className="flex w-[51px] shrink-0 flex-col bg-linear-to-r from-[#fbfbfb] to-[#ededed] pt-[6px]">
      <div className="flex h-[6px] pl-[18px]"><HHandle /></div>
      {list.map(([n, dd]) => (
        <div key={n} className="flex h-[32.1px] items-center pl-2">
          <I>{ic[n]}</I>
          {dd && <span className="ml-[6px]"><Arrow /></span>}
        </div>
      ))}
    </div>
  );
};

const Browser = () => (
  <div className="flex h-[121px] shrink-0 flex-col pt-[2px]">
    <PanelTitle t="Browser" pr="pr-[2px]" />
    <div className="flex h-[31px] shrink-0 items-center pl-[3px] pb-px">
      <LBar items={[
        [<I s={16}><rect x="2" y="2" width="18" height="18" stroke="#777" strokeWidth="1.500" fill="#f8f8f8" /><circle cx="20" cy="20" r="3.500" fill="#88b98d" stroke="#4d8854" strokeWidth="1.500" /></I>, 25],
        [<I s={16}><Refresh /></I>, 25], [<I s={16}><Funnel /></I>, 25], [<I s={16}><Tree /></I>, 25], [<I s={16}><Info /></I>, 25],
      ]} />
    </div>
    <div className="flex h-[70px] shrink-0 border border-[#b4b4b4] bg-white">
      <div className="flex-1 overflow-hidden pt-px">
        {[["Favorites", <Star5 s={16} />], ["Spatial Bookmarks", <I s={16}><Scroll /><path d="M14 2h4v10l-2-2-2 2z" fill="#5688c0" /></I>],
          ["Home", <I s={16}><path d="M2 4h7l2 2h11v16H2z" fill="#eee" stroke="#888" /><path d="M6 14l6-6 6 6M8 13v7h8v-7M11 20v-4h2v4" stroke="#333" strokeWidth="1.500" /></I>],
          ["GeoPackage", <I s={17}><Box3D /></I>]].map(([t, n], i) => (
          <div key={i} className="flex h-[18px] items-center">
            <span className="w-[20px]">{i > 0 && <Exp w={20} />}</span>
            <span className="flex w-[22px] justify-center">{n}</span>
            <span className="pt-px pl-[3px] tracking-[-0.3px]">{t}</span>
          </div>
        ))}
      </div>
      <div className="flex w-[14px] flex-col border-l border-[#b4b4b4] bg-[#e6e6e6]">
        <SBtn up /><div className="h-[28px] border-b border-[#b4b4b4] bg-[#fbfbfb]" /><div className="flex-1" /><SBtn />
      </div>
    </div>
  </div>
);

const Layers = () => (
  <div className="flex min-h-0 flex-1 flex-col">
    <div className="flex h-[7px] shrink-0 items-start justify-center pt-[2px]"><Dots /></div>
    <PanelTitle t="Layers" pr="pr-[2px]" />
    <div className="flex h-[31px] shrink-0 items-center pl-[4px] pb-px">
      <LBar items={[
        [<span className="flex h-[24px] w-[24px] items-center justify-center rounded-[3px] border border-[#b1b1b1] bg-[#dcdcdc]"><I s={16}><path d="M1 9l11-5 3 9-9 9z" fill="#f5c932" /><path d="M1 9l4-2 5 13-4 2z" fill="#db5136" /><path d="M8 13l5-4 2 1 6-8 2 2-5 9v4l-4 4z" fill="#c98a45" stroke="#7b5422" /></I></span>, 24],
        [<I s={17}><path d="M5 8H1.500v14h12v-3M5 5h12v14H5z" stroke="#777" fill="#eee" strokeWidth="1.500" /><path d="M9 8V3c0-2 4-2 4 0v10c0 2-3 2-3 0V8" stroke="#345" strokeWidth="1.500" /><circle cx="19.500" cy="19.500" r="4" fill="#6ba874" /><path d="M19.500 17v5M17 19.500h5" stroke="#fff" strokeWidth="1.500" /></I>, 26],
        [<I s={17}><path d="M1 12c5-8 16-8 21 0-5 7-16 7-21 0z" fill="#fff" stroke="#999" strokeWidth="1.500" /><circle cx="11.500" cy="11.500" r="5" fill="#4e7fb8" /><circle cx="11.500" cy="11.500" r="2" fill="#111" /><path d="M16 19h8l-4 4z" fill="#444" /></I>, 25],
        [<I s={16}><Funnel /></I>, 25],
        [<I s={18}><text x="1" y="15" fontSize="20" fontWeight="bold" fontFamily="Liberation Serif" fill="#7f4f87">ε</text><path d="M12 13h9v3l-2 1v5h-4v-5l-3-1z" fill="#bbb" stroke="#888" /></I>, 26],
        [<Arrow />, 8], [<span />, 3],
        [<I s={16}><Tree down /></I>, 25], [<I s={16}><Tree /></I>, 25],
        [<I s={16}><rect x="2" y="2" width="18" height="18" stroke="#777" strokeWidth="1.500" fill="#f8f8f8" /><rect x="14" y="15" width="9" height="8" rx="2" fill="#e04646" /><path d="M16 19h5" stroke="#fff" strokeWidth="2" /></I>, 25],
      ]} />
    </div>
    <div className="flex min-h-0 flex-1 border border-[#b4b4b4] bg-white">
      <div className="min-w-0 flex-1 overflow-hidden pt-[2px]">
        <div className="flex h-[18px] items-center justify-between pl-[23px]"><span className="flex items-center"><Tick /><span className="ml-[5px] flex"><Swatch c="#f3a5b0" /></span><b className="ml-[5px] pt-[2px] tracking-[-0.4px]">green_spaces_gridded</b></span><span className="h-full w-[3px] bg-[#e3e3e3]" /></div>
        <div className="flex h-[18px] items-center justify-between bg-[#0a78d7] pl-[23px] text-white"><span className="flex items-center"><Tick /><span className="ml-[5px] flex"><Swatch c="#95a36e" /></span><b className="ml-[5px] pt-[2px] tracking-[-0.52px] underline">builtup_spaces_gridded</b></span><span className="mr-px h-[16px] w-[3px] bg-[#eee]" /></div>
        <div className="flex h-[18px] items-center justify-between"><span className="flex items-center"><Exp open w={19} /><span className="ml-1 flex"><Tick /></span><span className="mx-[5px] flex w-[18px] justify-center"><I s={18}><Poly /></I></span><b className="pt-[2px] tracking-[-0.35px]">Intersection</b></span>
          <span className="flex h-full gap-[2px]"><span className="flex w-[15px] items-center justify-center border border-[#ddd] bg-[#f6f6f6]"><svg width="13" height="12"><path d="M3.500 0v12M6.500 0v12M9.500 0v12" stroke="#888" /><rect x="1" y="3" width="11" height="6" rx="1" fill="#fff" stroke="#777" /></svg></span><span className="w-[3px] bg-[#e3e3e3]" /></span></div>
        {classes.map(([n, c]) => (
          <div key={n} className="flex h-[20px] items-center pl-[43px]"><Tick /><span className="ml-[6px] flex"><Swatch c={c} /></span><span className="ml-[6px] pt-[2px] tracking-[-0.5px]">{n}</span></div>
        ))}
        <div className="flex h-[20px] items-center pl-[43px]"><Tick /><span className="ml-[6px] flex"><Swatch c="#18c952" /></span></div>
      </div>
      <div className="flex w-[14px] shrink-0 flex-col border-l border-[#b4b4b4] bg-[#e6e6e6]">
        <SBtn up /><div className="mt-[57px] h-[198px] border-y border-[#b4b4b4] bg-linear-to-r from-white to-[#f5f5f5]" /><div className="flex-1" /><SBtn />
      </div>
    </div>
  </div>
);

const GX = Array.from({ length: 19 }, (_, i) => 447.3 + i * 29.2);
const GY = [377, 406, 435.3, 464.5, 493.5];
const MapView = () => (
  <div className="h-full w-[561px] shrink-0 border border-[#b4b4b4] bg-white">
    <svg width="559" height="538" viewBox="434 161 559 538" className="block" fill="none">
      <rect x="447" y="377" width="547" height="117" fill="#edf6fa" />
      <g fill="#d0c06a" stroke="#4e5347" strokeWidth="3" transform="translate(560 365) scale(.3333)">
        <path d="M206 38L230 46 216 57 222 76 242 82 246 95 236 110 248 118 252 150 248 178 260 172 270 157 284 150 286 166 276 182 277 208 262 214 263 230 236 244 231 232 236 212 224 208 228 228 208 235 200 220 176 214 150 202 152 180 142 156 164 138 182 124 186 76 202 56z" />
        <path d="M188 117l46 0 0-8M186 122l4 20M142 158l40-10 10-16 8 22 22 0 8 22 0 26-8 10M216 118v28l-4 10M248 120l-20 10M150 184l38-6M152 196l36-12M160 208l34-8M248 178l-16 16M276 190l-28 24M262 214l-24 0M190 152v40l10 24M232 88l8 14M208 60l-14 24" />
        <path d="M150 170l18-9 20-6 28-6" stroke="#e6aec0" strokeWidth="3" />
        <path d="M44 265l18-6 6-8 20 0 10-11 18 6 10 12 14 14-6 6-20 0-16-4-30 2-10-6z" /><path d="M56 262l44-6 30 18M70 256l38 14M60 266l36-6M96 240l6 24" />
        <path d="M187 275L210 268 222 280 220 292 204 296 190 288zM220 272L238 265 250 268 240 275 224 277zM308 180L322 176 338 184 341 198 330 208 310 202zM304 98L320 92 340 96 350 116 344 124 332 120 322 136 312 146 302 136 308 126 294 122zM324 229L332 225 335 231 328 237zM280 58L290 67 291 74 284 66z" />
        <path d="M294 124l50-6M306 110l28 18M320 96l-6 34M312 140l18-26M306 116l34-12M326 100l10 18" strokeWidth="4" />
        <path d="M468 99L480 102 514 124 514 160 500 164 494 152 496 132 482 114 468 106zM448 128L460 125 488 134 494 164 480 172 452 158 446 152zM407 165L416 160 424 172 444 174 446 184 434 190 418 186 408 176zM440 160L458 154 464 170 448 176z" />
        <path d="M412 166l30 18M416 180l28-8M494 130l18-4M446 150l14 12M486 134l10 20" />
        <g fill="#edb5c1" stroke="#80606a"><path d="M134 208L152 197 154 210 170 220 170 228 186 224 192 234 200 236 198 246 182 250 168 238 156 240 158 222zM464 88L474 86 480 92 474 97 466 95z" /></g>
        <path d="M146 240L160 234 174 242 182 256 178 266 164 264 148 256z" fill="#a78594" /><path d="M162 236l-8 20M176 242l-12 20M150 246l30 10M154 240l24 8M170 246v20" />
        <g fill="#4b514e" stroke="none"><path d="M190 308h18v5h-18zM292 151h6v5h-6zM306 226h5v4h-5zM305 248h5v5h-5zM346 287h4v3h-4zM368 270h4v3h-4zM380 269h4v3h-4zM381 257h4v3h-4zM370 280h4v3h-4zM194 165h5v9h-5zM212 178h6v6h-6zM236 148h5v12h-5zM202 96h3v10h-3z" /></g>
      </g>
      <g transform="translate(866 381)"><path d="M6 2l6 0 3 4 1 8 3 4-2 4-7 0-3-4-5-1-2-2 5-2 1-4z" fill="#edb5c1" stroke="#5d5159" /><path d="M15 4l4-1 1 5-4 1zM9 4l1 4M11 10l6 2M2 13l6 1M4 11l4 5" fill="#4d5350" stroke="#5d5159" /></g>
      <path d="M870.500 464h4v3h-4z" fill="#47504e" />
      <g stroke="#30383a" strokeOpacity=".58">
        {GX.map((x) => <path key={x} d={`M${x} 377V493.500`} />)}
        {GY.map((y, i) => <path key={y} d={`M447 ${y}H994`} strokeOpacity={i % 4 === 0 ? 0.45 : 0.6} />)}
      </g>
      <path transform="translate(430 365) scale(.36353 .33333)" stroke="#3d4446" strokeWidth="2.500" strokeLinejoin="round"
        d="M49 349V270l11-5 12 2 12 6 20-1 14-1 14-7 10 3 10 8 13 4 13-4 12-20 16-6 10-10 4-14-9-20 28 1 60 2 65 7 30 3 20 0 20-4 14-2 20-8 10-4M550 38l18 10 32 14h22l18 22 20 9h59l-14-24 8-9 10 6 5-8-6-10 68-2 55 7 155 1 172 1 111 2 2 28-14 14-20-2M1250 100l8 65 20 4 12 16 15-22 42-25 18 8 20 1 18 28-8 20-30 20-25 20 4 15 20 12 28 4 9 14 19 12 10-9 25 8 25-2 20 0 11 10v54L1420 345 1330 330 1250 312 1170 297 1100 290H1030L960 297 900 303 780 305 690 307 676 312 672 334 610 327 500 324 370 326 210 331 120 340 49 349" />
    </svg>
  </div>
);

const SymBtn = ({ children, dim = false }: Kids & { dim?: boolean }) => (
  <div className={`flex h-[24px] w-[28px] shrink-0 items-center justify-center ${BTN}`}><span className={dim ? "opacity-30" : ""}>{children}</span></div>
);
const Spin = ({ v, w }: { v: string; w: number }) => (
  <div className="flex h-[21px] shrink-0 items-center rounded-[3px] border border-[#ababab] bg-white pl-1" style={{ width: w }}>
    <span className="flex-1 pt-[2px]">{v}</span>
    <span className="flex h-full w-[14px] flex-col items-center justify-center gap-[3px] border-l border-[#c4c4c4] bg-[#f6f6f6]"><UpArrow /><Arrow /></span>
  </div>
);

const Styling = () => (
  <div className="flex h-[361px] shrink-0 flex-col pt-[2px]">
    <PanelTitle t="Layer Styling" pr="pr-[2px]" />
    <div className={`${TAHOMA} mt-[3px] ml-[3px] flex h-[24px] w-[360px] shrink-0 items-center px-[5px] ${BTN}`}>
      <I s={17}><Poly /></I><span className="ml-[1px] flex-1 pt-[2px] tracking-[-0.15px]">builtup_spaces_gridded</span><Arrow /><span className="w-[2px]" />
    </div>
    <div className="mt-[6px] ml-[3px] flex h-[303px] shrink-0">
      <div className="flex w-[38px] shrink-0 flex-col">
        <div className="flex h-[32px] items-center justify-center"><I s={22}><path d="M2 6l13-3 2 12-11 7z" fill="#7fc59f" /><path d="M2 8l5-1 3 13-7 1z" fill="#d05591" /><path d="M7 5l7-2 1 6-7 2z" fill="#92c9f0" /><path d="M23 2l-8 9" stroke="#8c8c70" strokeWidth="2.500" /><path d="M11 10l8 5-8 8-4-7z" fill="#9b9b84" stroke="#6b6b55" /></I></div>
        <div className="flex flex-1 flex-col items-center bg-[#5b5b5b] pt-[5px]">
          <div className="flex h-[32px] w-[30px] items-start"><I><g transform="translate(0 1)"><Tag c="#f0d03c" s="#e0bd22" /></g></I></div>
          <div className="h-[32px] w-[30px]"><I><path d="M12 1l10 5-10 6L2 6z" fill="#f47b7b" stroke="#ad2222" /><path d="M2 6l10 6v11L2 17z" fill="#86df3c" stroke="#397f11" /><path d="M22 6l-10 6v11l10-6z" fill="#f7e84c" stroke="#a48c12" /></I></div>
          <div className="h-[32px] w-[30px]"><I><path d="M12 7v10M4 17V12l2-8h12l2 8v5" stroke="#c58b3a" strokeWidth="2" /><rect x="7" y="1" width="9" height="7" fill="#ed5656" stroke="#b53434" /><rect x="1" y="16.500" width="9" height="6" fill="#f8dd52" stroke="#b99518" /><rect x="13.500" y="16.500" width="9" height="6" fill="#81b0ea" stroke="#4579b8" /></I></div>
          <div className="h-[32px] w-[30px]"><I><g transform="translate(1 1) scale(.58)"><Redo c="#7ca98e" /></g><g transform="translate(9 9) scale(.58)"><Undo /></g></I></div>
        </div>
      </div>
      <div className="flex w-[322px] flex-col pl-[3px]">
        <div className="flex h-[274px] shrink-0">
          <div className="flex w-[305px] flex-col overflow-hidden">
            <div className={`${TAHOMA} flex h-[24px] shrink-0 items-center px-[6px] ${BTN}`}>
              <svg width="14" height="15"><path d="M1 1.500h9v3H1zM4 6h9v3H4zM1 10.500h9v3H1z" fill="#1bab60" stroke="#11693a" /></svg>
              <span className="ml-[3px] flex-1 pt-[3px] tracking-[-0.25px]">Single symbol</span><Arrow />
            </div>
            <div className="mt-[6px] flex h-[136px] shrink-0">
              <div className="flex w-[106px] shrink-0 items-center pl-5"><div className="h-[61px] w-[61px] border border-[#222] bg-[#d3b43b]" /></div>
              <div className="w-[131px] shrink-0 border border-[#b4b4b4] bg-white">
                <div className="flex h-[18px] items-center bg-[#f0f0f0]"><Exp open w={20} /><span className="ml-[3px] h-4 w-4 border border-[#5e6d56] bg-[#95a36e]" /><b className="ml-[6px] pt-[2px] tracking-[-0.4px]">Fill</b></div>
                <div className="flex h-[18px] items-center pl-[43px]"><span className="h-4 w-4 border border-[#756323] bg-[#d3b43b]" /><span className="ml-[6px] pt-[2px] tracking-[-0.15px]">Simple fill</span></div>
              </div>
              <div className="ml-[6px] grid w-[62px] shrink-0 grid-cols-[28px_28px] content-start gap-x-[6px] gap-y-[5px] pt-px">
                <SymBtn><svg width="14" height="14"><path d="M4.500 .5h5v4h4v5h-4v4h-5v-4h-4v-5h4z" fill="#fff" stroke="#397b41" /><path d="M7 2.500v9M2.500 7h9" stroke="#397b41" strokeWidth="1.800" /></svg></SymBtn>
                <SymBtn dim><svg width="14" height="12"><path d="M7 1l6 10H1z" fill="#aaa" stroke="#666" /></svg></SymBtn>
                <SymBtn dim><svg width="14" height="6"><rect x=".5" y=".5" width="13" height="5" fill="#fff" stroke="#a55" /><path d="M3 3h8" stroke="#a55" /></svg></SymBtn>
                <SymBtn dim><svg width="14" height="12"><path d="M7 11L1 1h12z" fill="#aaa" stroke="#666" /></svg></SymBtn>
                <SymBtn dim><svg width="14" height="14"><path d="M4 1h9v9M4 1v9h4M1 3v10h8M8 8h5v5H8z" fill="none" stroke="#555" strokeWidth="1.500" /></svg></SymBtn>
                <SymBtn dim><svg width="14" height="14"><rect x="1" y="7" width="12" height="7" fill="#887" /><path d="M4 3c2-3 7-2 6 4" fill="none" stroke="#555" strokeWidth="2" /></svg></SymBtn>
              </div>
            </div>
            <div className="mt-[6px] h-px shrink-0 bg-[#a5a5a5]" />
            <div className={`${TAHOMA} mt-[8px] flex h-[69px] shrink-0`}>
              <div className="flex w-[282px] flex-col">
                <div className="flex h-[23px] items-center"><span className="w-[37px] pt-[2px]">Unit</span><div className={`flex h-[23px] flex-1 items-center justify-between pr-[7px] pl-[4px] ${BTN}`}><span className="pt-[2px] tracking-[-0.3px]">Millimeters</span><Arrow /></div></div>
                <div className="flex h-[22px] items-center"><span className="w-[38px] pt-[2px] tracking-[-0.2px]">Opacity</span>
                  <div className="flex w-[140px] items-center"><div className="h-[6px] flex-1 rounded-l-sm border border-[#0765b3] bg-[#2095ef]" /><div className="h-[13px] w-[13px] rounded-[3px] border border-[#aaa] bg-white" /></div>
                  <span className="w-[4px]" /><Spin v="100.0 %" w={100} /></div>
                <div className="flex h-[23px] items-center"><span className="w-[37px] pt-px">Color</span><div className={`flex h-[22px] w-[233px] items-center p-[3px] ${BTN}`}><div className="h-full w-full rounded-[3px] bg-[#d3b43b]" /></div><div className={`flex h-[22px] flex-1 items-center justify-center ${BTN}`}><Arrow /></div></div>
              </div>
              <div className="ml-[9px] flex w-[14px] flex-col border-l border-[#c4c4c4] bg-[#e3e3e3]"><SBtn up /><div className="h-[27px] border-b border-[#b4b4b4] bg-[#fbfbfb]" /><div className="flex-1" /><SBtn /></div>
            </div>
            <div className="mt-[13px] flex h-[11px] shrink-0 items-start overflow-hidden pl-[4px]"><svg width="9" height="11" className="shrink-0"><path d="M1 0v11l7-5.500z" fill="#333" /></svg><b className="ml-[8px] font-['DejaVu_Sans_Condensed'] text-[11.500px] leading-[14px] tracking-[-0.3px]">Layer Rendering</b></div>
          </div>
          <div className="flex w-[14px] flex-col border-l border-[#c4c4c4] bg-[#e3e3e3]"><SBtn up /><div className="flex-1 border-b border-[#b4b4b4] bg-[#fbfbfb]" /><div className="h-[4px]" /><SBtn /></div>
        </div>
        <div className={`${TAHOMA} flex flex-1 items-end`}>
          <div className={`flex h-[23px] w-[24px] items-center justify-center ${BTN}`}><I s={14}><Undo /></I></div>
          <div className={`ml-[6px] flex h-[23px] w-[24px] items-center justify-center ${BTN}`}><I s={14}><Redo /></I></div>
          <div className="ml-[98px] flex h-[23px] items-center"><Tick /><span className="ml-[4px] w-[69px] pt-px">Live update</span></div>
          <div className={`flex h-[22px] w-[80px] items-center justify-center pt-px ${BTN}`}>Apply</div>
        </div>
      </div>
    </div>
    <div className="mt-[4px] h-px w-full shrink-0 bg-[#b4b4b4]" />
  </div>
);

const Topology = () => (
  <div className="flex min-h-0 flex-1 flex-col">
    <div className={`${TAHOMA} flex h-[24px] shrink-0`}>
      <div className="-mt-px flex h-[23px] w-[87px] items-center justify-center rounded-b-[3px] border border-t-0 border-[#b4b4b4] bg-[#fafafa] pt-[2px] pr-[2px]">Layer Styling</div>
      <div className="flex h-[20px] w-[115px] items-center justify-center rounded-b-[3px] border border-t-0 border-l-0 border-[#bbb] bg-[#dcdcdc] pt-[2px] pr-[2px] tracking-[0.1px]">Processing Toolbox</div>
    </div>
    <div className="flex h-[6px] shrink-0 justify-center pt-px"><Dots /></div>
    <PanelTitle t="Topology Checker Panel" pr="pr-[2px]" />
    <div className="flex h-[30px] shrink-0 items-center pl-[3px]">
      <LBar items={[[<I s={16}><Check /></I>, 25], [<I s={17}><rect x="1" y="1" width="21" height="21" fill="#e2e2e2" stroke="#333" strokeDasharray="2 2" /><g transform="translate(5 5) scale(.75)"><Check /></g></I>, 25], [<I s={17}><Wrench /></I>, 25]]} />
    </div>
    <div className="mt-[7px] h-[70px] w-full shrink-0 border border-[#b4b4b4] bg-white">
      <div className="flex h-[19px] items-center border-b border-[#b4b4b4] bg-linear-to-b from-white to-[#f0f0f0] text-center leading-[20px] tracking-[-0.25px]"><span className="h-full w-[110px] border-r border-[#ccc]">Error</span><span className="h-full w-[56px] border-r border-[#ccc]">Layer</span><span className="h-full flex-1">Feature ID</span></div>
    </div>
    <div className={`${TAHOMA} flex h-[25px] shrink-0 items-center pt-[5px]`}><span className="h-[14px] w-[14px] border border-[#b5b5b5] bg-white" /><span className="ml-[4px] w-[167px] pt-[2px]">Show errors</span><span className="pt-[2px]">No errors were found</span></div>
  </div>
);

const Status = () => (
  <div className={`${TAHOMA} flex h-[28px] shrink-0 items-center pl-1`}>
    <div className="flex h-[22px] w-[200px] shrink-0 items-center rounded-[3px] border border-[#ababab] bg-white pl-[7px] text-[#777]"><svg width="14" height="14"><circle cx="5.500" cy="5.500" r="4" stroke="#888" strokeWidth="1.300" fill="none" /><path d="M8.500 8.500l4 4" stroke="#888" strokeWidth="1.800" /></svg><span className="ml-[6px] pt-[2px]">Type to locate (Ctrl+K)</span></div>
    <span className="w-[362px] shrink-0 pt-[2px] pl-[7px] tracking-[-0.08px] whitespace-nowrap">85 feature(s) selected on layer Intersection.</span>
    <span className="w-[57px] shrink-0 pt-[2px]">Coordinate</span>
    <div className="flex h-[21px] w-[92px] shrink-0 items-center rounded-[3px] border border-[#ababab] bg-white pt-[2px] pl-[8px]">65758,197665</div>
    <div className="flex w-[32px] shrink-0 justify-start pl-[4px]"><I s={17}><path d="M2 5c0-4 4-5 6-1l7 10c1 4-3 4-5 1zM10 7l3-5 3 4M2 12l4 7 4-3" stroke="#333" strokeWidth="2" fill="#ddd" /><circle cx="16" cy="18" r="4" stroke="#333" strokeWidth="2" fill="#fff" /><path d="M13 10l8-7M16 12l7-2" stroke="#333" strokeWidth="1.500" /></I></div>
    <span className="w-[29px] shrink-0 pt-[2px]">Scale</span>
    <div className="flex h-[21px] w-[81px] shrink-0 items-center rounded-[3px] border border-[#ababab] bg-white pl-[2px]"><span className="flex-1 pt-[2px] tracking-[0]">1:1294744</span><span className="flex h-full w-[19px] items-center justify-center border-l border-[#c4c4c4] bg-[#f6f6f6]"><Arrow /></span></div>
    <div className="flex w-[32px] shrink-0 pl-[12px]"><svg width="13" height="16"><path d="M3 8V5c0-5 7-5 7 0v3" stroke="#777" strokeWidth="1.800" fill="none" /><rect x="1" y="7" width="11" height="8" rx="1" fill="#666" /></svg></div>
    <span className="w-[48px] shrink-0 pt-[2px] tracking-[-0.2px]">Magnifier</span><Spin v="100%" w={88} />
    <span className="w-[59px] shrink-0 pt-[2px] pl-[8px]">Rotation</span><Spin v="0.0 °" w={84} />
    <span className="ml-[6px] flex"><Tick /></span><span className="ml-[4px] w-[53px] pt-[2px]">Render</span>
    <svg width="15" height="14" viewBox="0 0 15 14" fill="none" stroke="#777" strokeWidth=".9"><ellipse cx="7.500" cy="7" rx="6.500" ry="5" fill="#bbb" /><path d="M0 7h15M7.500 0v14M2 4.500h11M2 9.500h11M5 2C3 5 3 9 5 12M10 2c2 3 2 7 0 10" /></svg>
    <span className="ml-[4px] w-[79px] pt-[2px]">EPSG:26391</span>
    <svg width="17" height="15" className="shrink-0"><ellipse cx="8.500" cy="6.500" rx="8" ry="6" fill="#555" /><path d="M7 11l5 4V9z" fill="#555" /><path d="M3.500 6h2M7.500 6h2M11.500 6h2" stroke="#fff" strokeWidth="2" /></svg>
  </div>
);

const TB = "flex shrink-0 items-center border-b border-[#b4b4b4] bg-linear-to-b from-[#fafafa] to-[#ededed]";

export default function App() {
  return (
    <div className="relative flex h-[728px] w-[1366px] flex-col overflow-hidden bg-[#efefef] font-['Open_Sans','Noto_Sans',sans-serif] text-[12px] leading-[16px] text-black">
      <div className="flex h-[23px] shrink-0 items-center bg-white pl-[2px]">
        <svg width="16" height="16" viewBox="0 0 24 24"><circle cx="12" cy="12" r="9" fill="none" stroke="#74a83a" strokeWidth="5" /><path d="M3 12a9 9 0 0 0 13 8" fill="none" stroke="#589632" strokeWidth="5" /><path d="M11 11h5l8 9v4h-5l-8-8z" fill="#fff" /><path d="M15 15h3l6 6v3h-4l-5-5z" fill="#589632" /><path d="M10 10h6l-1 3 2 2-1 2-6-1z" fill="#ee7913" /></svg>
        <span className="ml-[5px] flex-1 pt-px tracking-[-0.35px]">*Untitled Project - QGIS</span>
        <div className="flex items-center gap-[35px] pr-5 pb-[2px]">
          <svg width="10" height="10"><path d="M0 5.500h10" stroke="#000" /></svg>
          <svg width="11" height="11"><path d="M.5 2.500h8v8h-8zM2.500 2.500v-2h8v8h-2" fill="none" stroke="#000" /></svg>
          <svg width="11" height="11"><path d="M.5 .5l10 10M10.500 .5l-10 10" stroke="#000" /></svg>
        </div>
      </div>
      <div className="flex h-[20px] shrink-0 items-center border-b border-[#d4d4d4] bg-[#efefef] pl-[10px]">
        {menus.map(([a, b, c, w]) => <span key={a + b + c} className="shrink-0 pt-px tracking-[-0.25px] whitespace-nowrap" style={{ width: w }}>{a}<u>{b}</u>{c}</span>)}
      </div>
      <div className={`${TB} h-[39px]`}>
        <Handle w={12.5} />
        <Bar items={["newFile", "+open", "save", "layout", "layoutMgr", "style", "|", "hand", "pan", "*zoomIn", "zoomOut", "zoomFull", "zoomSel", "zoomLayer", "-zoomNative", "zoomLast", "-zoomNext", "newMap", "newBm", "bm", "refresh", "|", "identify", "-action", "V", "select", "v", "selForm", "v", "desel", "table", "abacus", "gear", "sigma", "measure", "v", "tips", "text", "v"]} />
      </div>
      <div className={`${TB} h-[39px]`}>
        <Handle w={12.5} />
        <Bar items={["dsm", "gpkg", "shp", "spatialite", "mem", "/", "virt", "|", "-edits", "pencil", "-saveE", "-addPoly", "-vertex", "V", "-modAttr", "-trash", "-cut", "-copy", "-paste", "-undo", "-redo", "|", "abc", "diagram", "/", "abPin", "abcRed", "/", "-abPin", "-eye", "-abcMove", "-abcRot", "-abcEd", "|"]} />
        <Handle w={17} />
        <Bar items={["python", "fire", "leaf", "earth", "|", "help", "|", "*topo", "tblRef"]} />
      </div>
      <div className={`${TB} h-[38px]`}>
        <Handle w={12.5} />
        <Bar items={["osmQ", "mapEd", "|"]} />
        <Handle w={17} />
        <Bar items={["chart", "|", "geoSearch"]} />
        <div className={`ml-px flex h-[22px] w-[81px] shrink-0 items-center justify-between pr-[6px] pl-[3px] ${BTN}`}><span className="pt-[2px] tracking-[-0.4px]">Ghana</span><Arrow /></div>
        <div className="ml-px flex h-[22px] w-[768px] items-center rounded-[3px] border border-[#ababab] bg-white pt-[2px] pl-[2px] tracking-[-0.3px] text-[#777]">Search for...</div>
      </div>
      <div className="flex h-[541px] shrink-0">
        <LeftTools />
        <div className="w-px shrink-0 bg-[#b4b4b4]" />
        <div className="flex w-[375px] shrink-0 flex-col"><Browser /><Layers /></div>
        <div className="flex w-[6px] shrink-0 items-center justify-center"><svg width="3" height="18"><path d="M1.500 0v18" stroke="#aaa" strokeDasharray="1 2" /></svg></div>
        <div className="pt-px"><MapView /></div>
        <div className="flex w-[6px] shrink-0 items-center justify-center"><svg width="3" height="18"><path d="M1.500 0v18" stroke="#aaa" strokeDasharray="1 2" /></svg></div>
        <div className="flex min-w-0 flex-1 flex-col"><Styling /><Topology /></div>
      </div>
      <Status />
      <div className="pointer-events-none absolute top-[650px] left-[1073px] flex flex-col whitespace-nowrap text-[#888]/55">
        <span className="text-[18.5px] leading-[24px] tracking-[0.1px]">Activate Windows</span>
        <span className="text-[14px] leading-[22px] tracking-[0.05px]">Go to Settings to activate Windows.</span>
      </div>
    </div>
  );
}
